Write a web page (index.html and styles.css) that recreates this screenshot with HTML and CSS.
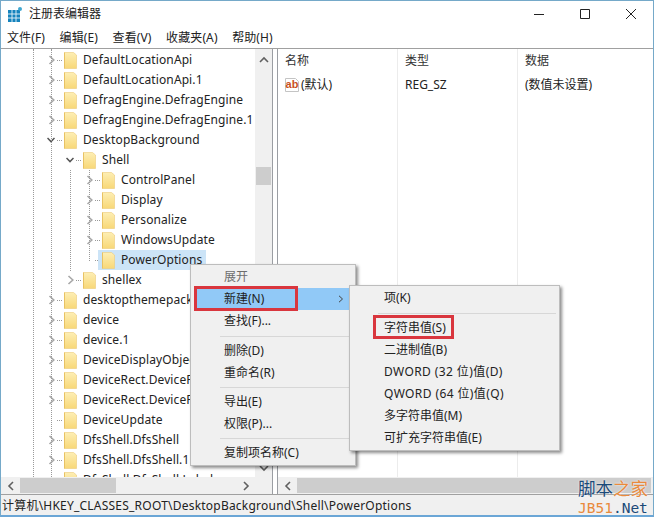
FILE: index.html
```html
<!DOCTYPE html>
<html lang="zh-CN">
<head>
<meta charset="utf-8">
<title>注册表编辑器</title>
<link rel="stylesheet" href="styles.css">
</head>
<body>
<svg class="defs" width="0" height="0" aria-hidden="true">
  <defs>
    <linearGradient id="fold" x1="0" y1="0" x2="0" y2="1">
      <stop offset="0" stop-color="#fdeeb4"/>
      <stop offset="1" stop-color="#f8d878"/>
    </linearGradient>
    <symbol id="folder" viewBox="0 0 13 17">
      <path d="M0.5 0.5H9.5L12.5 3V16.5H0.5Z" fill="url(#fold)" stroke="#eccb78" stroke-width="0.6"/>
      <path d="M0.5 0.5V16.5" stroke="#e8c263" stroke-width="1"/>
    </symbol>
    <symbol id="closed" viewBox="0 0 8 10">
      <path d="M2.5 1L6.8 5L2.5 9" fill="none" stroke="#a8a8a8" stroke-width="1.6"/>
    </symbol>
    <symbol id="open" viewBox="0 0 8 10">
      <path d="M0.5 3L4 6.6L7.5 3" fill="none" stroke="#555" stroke-width="1.5"/>
    </symbol>
  </defs>
</svg>
<div class="window">
  <header class="title">
    <svg class="app" width="14" height="15" viewBox="0 0 14 15">
      <path d="M0 3H12V15H0Z" fill="#1583bd"/>
      <path d="M4 3V15M8 3V15M0 7H12M0 11H12" stroke="#eaf5fb" stroke-width="0.9"/>
      <circle cx="12" cy="2" r="2" fill="#3fa7d0"/>
    </svg>
    <span class="title-text">注册表编辑器</span>
    <div class="controls">
      <svg width="12" height="12" viewBox="0 0 12 12"><path d="M1 6.5H11" stroke="#222"/></svg>
      <svg width="12" height="12" viewBox="0 0 12 12"><path d="M1.5 1.5H10.5V10.5H1.5Z" fill="none" stroke="#222"/></svg>
      <svg width="12" height="12" viewBox="0 0 12 12"><path d="M1 1L11 11M11 1L1 11" stroke="#222"/></svg>
    </div>
  </header>
  <nav class="menubar">
    <span>文件(F)</span><span>编辑(E)</span><span>查看(V)</span><span>收藏夹(A)</span><span>帮助(H)</span>
  </nav>
  <main class="panes">
    <section class="left">
      <div class="left-main">
        <div class="tree">
          <i class="vline v1"></i><i class="vline v2"></i><i class="vline v3"></i><i class="vline v4"></i>
          <div class="row l1"><svg class="chev" width="8" height="10"><use href="#closed"/></svg><i class="dots"></i><svg class="fold" width="13" height="17"><use href="#folder"/></svg><span>DefaultLocationApi</span></div>
          <div class="row l1"><svg class="chev" width="8" height="10"><use href="#closed"/></svg><i class="dots"></i><svg class="fold" width="13" height="17"><use href="#folder"/></svg><span>DefaultLocationApi.1</span></div>
          <div class="row l1"><svg class="chev" width="8" height="10"><use href="#closed"/></svg><i class="dots"></i><svg class="fold" width="13" height="17"><use href="#folder"/></svg><span>DefragEngine.DefragEngine</span></div>
          <div class="row l1"><svg class="chev" width="8" height="10"><use href="#closed"/></svg><i class="dots"></i><svg class="fold" width="13" height="17"><use href="#folder"/></svg><span>DefragEngine.DefragEngine.1</span></div>
          <div class="row l1"><svg class="chev" width="8" height="10"><use href="#open"/></svg><i class="dots"></i><svg class="fold" width="13" height="17"><use href="#folder"/></svg><span>DesktopBackground</span></div>
          <div class="row l2"><svg class="chev" width="8" height="10"><use href="#open"/></svg><i class="dots"></i><svg class="fold" width="13" height="17"><use href="#folder"/></svg><span>Shell</span></div>
          <div class="row l3"><svg class="chev" width="8" height="10"><use href="#closed"/></svg><i class="dots"></i><svg class="fold" width="13" height="17"><use href="#folder"/></svg><span>ControlPanel</span></div>
          <div class="row l3"><svg class="chev" width="8" height="10"><use href="#closed"/></svg><i class="dots"></i><svg class="fold" width="13" height="17"><use href="#folder"/></svg><span>Display</span></div>
          <div class="row l3"><svg class="chev" width="8" height="10"><use href="#closed"/></svg><i class="dots"></i><svg class="fold" width="13" height="17"><use href="#folder"/></svg><span>Personalize</span></div>
          <div class="row l3"><svg class="chev" width="8" height="10"><use href="#closed"/></svg><i class="dots"></i><svg class="fold" width="13" height="17"><use href="#folder"/></svg><span>WindowsUpdate</span></div>
          <div class="row l3 selected"><i class="chev-gap"></i><i class="dots"></i><div class="sel"><svg class="fold" width="13" height="17"><use href="#folder"/></svg><span>PowerOptions</span></div></div>
          <div class="row l2"><svg class="chev" width="8" height="10"><use href="#closed"/></svg><i class="dots"></i><svg class="fold" width="13" height="17"><use href="#folder"/></svg><span>shellex</span></div>
          <div class="row l1"><svg class="chev" width="8" height="10"><use href="#closed"/></svg><i class="dots"></i><svg class="fold" width="13" height="17"><use href="#folder"/></svg><span>desktopthemepackfile</span></div>
          <div class="row l1"><svg class="chev" width="8" height="10"><use href="#closed"/></svg><i class="dots"></i><svg class="fold" width="13" height="17"><use href="#folder"/></svg><span>device</span></div>
          <div class="row l1"><svg class="chev" width="8" height="10"><use href="#closed"/></svg><i class="dots"></i><svg class="fold" width="13" height="17"><use href="#folder"/></svg><span>device.1</span></div>
          <div class="row l1"><svg class="chev" width="8" height="10"><use href="#closed"/></svg><i class="dots"></i><svg class="fold" width="13" height="17"><use href="#folder"/></svg><span>DeviceDisplayObject</span></div>
          <div class="row l1"><svg class="chev" width="8" height="10"><use href="#closed"/></svg><i class="dots"></i><svg class="fold" width="13" height="17"><use href="#folder"/></svg><span>DeviceRect.DeviceRect</span></div>
          <div class="row l1"><svg class="chev" width="8" height="10"><use href="#closed"/></svg><i class="dots"></i><svg class="fold" width="13" height="17"><use href="#folder"/></svg><span>DeviceRect.DeviceRect.1</span></div>
          <div class="row l1"><i class="chev-gap"></i><i class="dots"></i><svg class="fold" width="13" height="17"><use href="#folder"/></svg><span>DeviceUpdate</span></div>
          <div class="row l1"><svg class="chev" width="8" height="10"><use href="#closed"/></svg><i class="dots"></i><svg class="fold" width="13" height="17"><use href="#folder"/></svg><span>DfsShell.DfsShell</span></div>
          <div class="row l1"><svg class="chev" width="8" height="10"><use href="#closed"/></svg><i class="dots"></i><svg class="fold" width="13" height="17"><use href="#folder"/></svg><span>DfsShell.DfsShell.1</span></div>
          <div class="row l1"><i class="chev-gap"></i><i class="dots"></i><svg class="fold" width="13" height="17"><use href="#folder"/></svg><span>DfsShell.DfsShell.Label</span></div>
        </div>
        <div class="vscroll">
          <svg width="10" height="8" viewBox="0 0 10 8"><path d="M1 6L5 2L9 6" fill="none" stroke="#606060" stroke-width="1.6"/></svg>
          <div class="vthumb"></div>
          <svg width="10" height="8" viewBox="0 0 10 8"><path d="M1 2L5 6L9 2" fill="none" stroke="#606060" stroke-width="1.6"/></svg>
        </div>
      </div>
      <div class="hscroll">
        <svg width="8" height="10" viewBox="0 0 8 10"><path d="M6 1L2 5L6 9" fill="none" stroke="#606060" stroke-width="1.6"/></svg>
        <div class="hthumb left-thumb"></div>
        <svg width="8" height="10" viewBox="0 0 8 10"><path d="M2 1L6 5L2 9" fill="none" stroke="#606060" stroke-width="1.6"/></svg>
      </div>
    </section>
    <section class="right">
      <div class="list">
        <div class="cell head">名称</div><div class="cell head">类型</div><div class="cell head">数据</div>
        <div class="cell name">
          <svg class="ab" width="16" height="16" viewBox="0 0 16 16">
            <path d="M1.5 1.5H11.5L14.5 4.5V14.5H1.5Z" fill="#fff" stroke="#c4c4c4"/>
            <text x="8" y="10.5" text-anchor="middle" class="ab-text">ab</text>
          </svg>
          <span>(默认)</span>
        </div>
        <div class="cell value">REG_SZ</div><div class="cell value">(数值未设置)</div>
        <div class="fill"></div><div class="fill"></div><div class="fill"></div>
      </div>
      <div class="hscroll">
        <svg width="8" height="10" viewBox="0 0 8 10"><path d="M6 1L2 5L6 9" fill="none" stroke="#606060" stroke-width="1.6"/></svg>
        <div class="hthumb right-thumb"></div>
      </div>
    </section>
  </main>
  <footer class="status">计算机\HKEY_CLASSES_ROOT\DesktopBackground\Shell\PowerOptions</footer>
</div>

<div class="menu ctx">
  <div class="item disabled">展开</div>
  <div class="item active"><span>新建(N)</span><svg width="6" height="8" viewBox="0 0 6 8"><path d="M1 0.8L4.5 4L1 7.2" fill="none" stroke="#444" stroke-width="1"/></svg></div>
  <div class="item">查找(F)...</div>
  <div class="sep"></div>
  <div class="item">删除(D)</div>
  <div class="item">重命名(R)</div>
  <div class="sep tight"></div>
  <div class="item">导出(E)</div>
  <div class="item">权限(P)...</div>
  <div class="sep tight"></div>
  <div class="item">复制项名称(C)</div>
</div>
<div class="menu sub">
  <div class="item">项(K)</div>
  <div class="sep"></div>
  <div class="item">字符串值(S)</div>
  <div class="item">二进制值(B)</div>
  <div class="item wide">DWORD (32 位)值(D)</div>
  <div class="item wide">QWORD (64 位)值(Q)</div>
  <div class="item">多字符串值(M)</div>
  <div class="item">可扩充字符串值(E)</div>
</div>
<div class="mark mark-new"></div>
<div class="mark mark-str"></div>
<div class="watermark">
  <div class="wm-cn"><span class="navy">脚本</span><span class="orange">之家</span></div>
  <div class="wm-en"><span class="orange">JB51</span><span class="navy">.Net</span></div>
</div>
</body>
</html>
```
FILE: styles.css
```css
* { box-sizing: border-box; }
html, body { margin: 0; padding: 0; }
body {
  width: 654px;
  height: 517px;
  overflow: hidden;
  position: relative;
  background: #fff;
  color: #222;
  font: 12px/20px "Noto Sans", "Noto Sans CJK SC", sans-serif;
}
.defs { position: absolute; }
.window {
  width: 654px;
  height: 517px;
  display: flex;
  flex-direction: column;
  border: 1px solid #75a9c9;
  border-bottom: 2px solid #6ba6d6;
}
.title {
  height: 26px;
  flex: none;
  display: flex;
  align-items: center;
  padding-left: 7px;
}
.title-text { margin-left: 7px; }
.app { flex: none; }
.controls {
  margin-left: auto;
  display: flex;
  gap: 34px;
  padding-right: 16px;
}
.menubar {
  height: 21px;
  flex: none;
  display: flex;
  gap: 14.5px;
  padding-left: 6px;
  align-items: center;
  white-space: nowrap;
  letter-spacing: .12px;
}
.panes {
  flex: 1;
  min-height: 0;
  display: flex;
  gap: 4px;
  border-top: 1px solid #a0a0a0;
  background: #fff;
}
.left, .right {
  display: flex;
  flex-direction: column;
  min-width: 0;
}
.left {
  width: 272px;
  flex: none;
  border-right: 1px solid #9b9ea3;
}
.right {
  flex: 1;
  border-left: 1px solid #9b9ea3;
}
.left-main {
  flex: 1;
  min-height: 0;
  display: flex;
}
.tree {
  flex: 1;
  min-width: 0;
  overflow: hidden;
  position: relative;
  background: #fff;
  padding-top: 1px;
  letter-spacing: .1px;
}
.row {
  height: 20px;
  display: flex;
  align-items: center;
  white-space: nowrap;
}
.l1 { padding-left: 46px; }
.l2 { padding-left: 65px; }
.l3 { padding-left: 84px; }
.chev, .chev-gap { width: 8px; height: 10px; flex: none; display: block; }
.dots {
  width: 5px;
  margin: 0 2px;
  flex: none;
  border-top: 1px dotted #9a9a9a;
}
.fold { flex: none; }
.row .fold + span { margin-left: 6px; }
.sel {
  display: flex;
  align-items: center;
  height: 20px;
  margin-left: -4px;
  padding: 0 4px;
  background: #cce4f7;
}
.vline {
  position: absolute;
  top: 0;
  border-left: 1px dotted #9a9a9a;
}
.v1 { left: 32px; bottom: 0; }
.v2 { left: 50px; bottom: 0; }
.v3 { left: 69px; top: 121px; height: 101px; }
.v4 { left: 88px; top: 121px; height: 91px; }
.vscroll {
  width: 17px;
  flex: none;
  background: #f0f0f0;
  display: flex;
  flex-direction: column;
  align-items: center;
  padding: 7px 0 0;
  position: relative;
}
.vthumb {
  width: 15px;
  height: 18px;
  margin-top: 103px;
  margin-bottom: auto;
  background: #cdcdcd;
}
.vscroll svg:last-child { margin-bottom: 5px; }
.hscroll {
  height: 17px;
  flex: none;
  display: flex;
  align-items: center;
  background: #f0f0f0;
  padding: 0 22px 0 6px;
  justify-content: space-between;
}
.hthumb { height: 15px; background: #cdcdcd; }
.left-thumb { width: 96px; margin-left: 5px; margin-right: auto; }
.right .hscroll { padding-right: 2px; justify-content: flex-start; }
.right-thumb { flex: 1; margin-left: 5px; }
.list {
  flex: 1;
  min-height: 0;
  display: grid;
  grid-template-columns: 120px 120px 1fr;
  grid-template-rows: 22px 28px 1fr;
}
.cell {
  padding-left: 7px;
  white-space: nowrap;
  border-right: 1px solid #ececec;
  line-height: 24px;
}
.head { color: #333; }
.value { line-height: 28px; }
.name {
  display: flex;
  align-items: center;
  gap: 1px;
  padding-left: 6px;
}
.ab { flex: none; }
.ab-text {
  font: bold 11px "Liberation Sans", sans-serif;
  fill: #c8501e;
}
.fill { border-right: 1px solid #ececec; }
.fill:last-child, .cell:nth-child(3), .cell:nth-child(6) { border-right: 0; }
.status {
  height: 21px;
  flex: none;
  border-top: 1px solid #a0a0a0;
  background: #f0f0f0;
  padding: 1px 0 0 1px;
  white-space: nowrap;
  line-height: 20px;
  letter-spacing: .22px;
}
.menu {
  position: absolute;
  background: #f0f0f0;
  border: 1px solid #bdbdbd;
  box-shadow: 2px 2px 3px rgba(0, 0, 0, .45);
  padding: 1px 0;
}
.ctx { left: 190px; top: 264px; width: 166px; height: 202px; }
.sub { left: 349px; top: 285px; width: 211px; height: 166px; }
.item {
  height: 22px;
  line-height: 22px;
  display: flex;
  align-items: center;
  justify-content: space-between;
  white-space: nowrap;
}
.ctx .item { padding: 0 11px 0 33px; }
.sub .item { padding: 0 11px 0 34px; }
.sub .wide { letter-spacing: .4px; }
.disabled { color: #6d6d6d; }
.ctx .active { background: #91c9f7; margin-left: 3px; padding-left: 30px; margin-right: 6px; padding-right: 5px; }
.sep {
  height: 1px;
  margin: 3.5px 5px 3.5px 29px;
  background: #d7d7d7;
}
.sep.tight { margin-top: 3px; margin-bottom: 3px; }
.sub .sep { margin-left: 28px; margin-right: 3px; }
.mark {
  position: absolute;
  border: 3px solid #d9363e;
}
.mark-new { left: 194px; top: 286px; width: 104px; height: 25px; }
.mark-str { left: 373px; top: 315px; width: 81px; height: 24px; }
.watermark {
  position: absolute;
  left: 578px;
  top: 479px;
  width: 75px;
}
.wm-cn { font: 17.5px/18px "Noto Sans CJK SC", sans-serif; white-space: nowrap; text-shadow: 0 0 2px #fff; }
.wm-en { font: 14.5px/18px "DejaVu Sans Mono", monospace; white-space: nowrap; margin-top: 2px; }
.navy { color: #1b4a78; }
.orange { color: #e98a3c; }
```
